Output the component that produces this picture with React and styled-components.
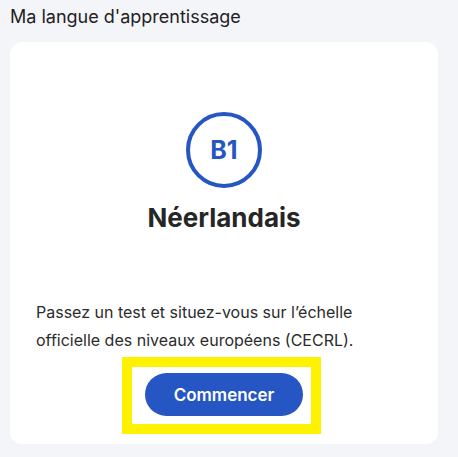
import styled, { createGlobalStyle } from "styled-components";

const GlobalStyle = createGlobalStyle`
  body {
    margin: 0;
    background: #f4f5f8;
    font-family: Inter, "Noto Sans", sans-serif;
    color: #262626;
  }
`;

const Page = styled.main`
  padding: 6px 20px 14px 10px;
`;

const Heading = styled.h2`
  margin: 0 0 14px;
  font-size: 18px;
  font-weight: 400;
  line-height: 22px;
  color: #1f2124;
`;

const Card = styled.section`
  background: #ffffff;
  border-radius: 12px;
  padding: 70px 26px 10px;
  display: flex;
  flex-direction: column;
  align-items: center;
`;

const LevelBadge = styled.div`
  box-sizing: border-box;
  width: 76px;
  height: 76px;
  border: 4px solid #2656c4;
  border-radius: 50%;
  display: grid;
  place-items: center;
  color: #2656c4;
  font-size: 25px;
  font-weight: 700;
`;

const Language = styled.h3`
  margin: 14px 0 0;
  font-size: 26px;
  line-height: 32px;
  font-weight: 700;
  color: #262626;
`;

const Description = styled.p`
  align-self: stretch;
  margin: 64px 0 0;
  font-size: 16px;
  line-height: 28px;
  color: #2b2b2b;
`;

const Highlight = styled.div`
  margin: 3px 5px 0 0;
  border: 10px solid #fff200;
  padding: 6px 8px 8px 13px;
  display: flex;
`;

const StartButton = styled.button`
  width: 158px;
  height: 43px;
  border: none;
  border-radius: 22px;
  background: #2656c4;
  color: #ffffff;
  font-family: inherit;
  font-size: 17px;
  font-weight: 600;
  cursor: pointer;
`;

export default function App() {
  return (
    <>
      <GlobalStyle />
      <Page>
        <Heading>Ma langue d'apprentissage</Heading>
        <Card>
          <LevelBadge>B1</LevelBadge>
          <Language>Néerlandais</Language>
          <Description>
            Passez un test et situez-vous sur l’échelle officielle des niveaux
            européens (CECRL).
          </Description>
          <Highlight>
            <StartButton type="button">Commencer</StartButton>
          </Highlight>
        </Card>
      </Page>
    </>
  );
}
